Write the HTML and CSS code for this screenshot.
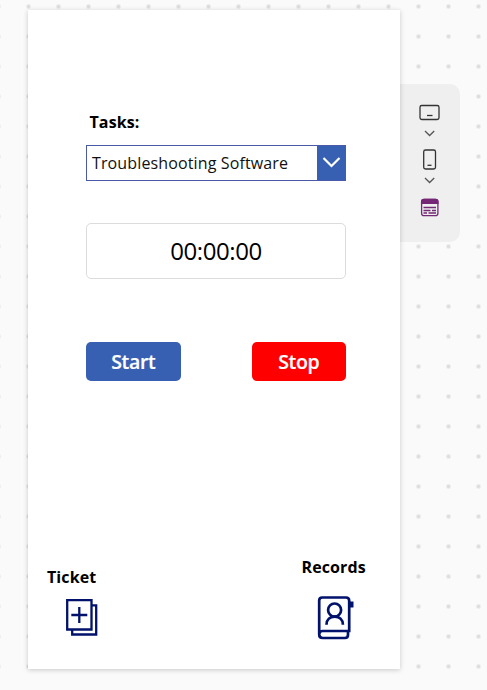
FILE: index.html
```
<!DOCTYPE html>
<html lang="en">
<head>
<meta charset="utf-8">
<title>Task timer</title>
<link rel="stylesheet" href="styles.css">
</head>
<body>
<main class="screen">
  <label class="label tasks-label">Tasks:</label>
  <div class="dropdown">
    <span class="dropdown-value">Troubleshooting Software</span>
    <span class="dropdown-arrow"><svg width="29" height="34" viewBox="0 0 29 34"><path d="M6.500 12l8 8 8-8" fill="none" stroke="#fff" stroke-width="2.200"/></svg></span>
  </div>
  <div class="timer">00:00:00</div>
  <div class="buttons">
    <button class="button start">Start</button>
    <button class="button stop">Stop</button>
  </div>
  <nav class="nav">
    <a class="nav-item ticket"><span class="label">Ticket</span>
      <svg width="34" height="40" viewBox="0 0 34 40" fill="none" stroke="#00126b" stroke-width="2.300"><path d="M2.200 2.200h24.300v29.300H2.200zM7.200 32v4.500h24V7.300h-4.500M14.300 9v16M6.300 17h16"/></svg>
    </a>
    <a class="nav-item records"><span class="label">Records</span>
      <svg width="40" height="46" viewBox="0 0 40 46" fill="none" stroke="#00126b" stroke-width="2.700"><path d="M4.200 39.500V5.500q0-3 3-3H31q3.200 0 3.200 3.200V36H7.500q-3.300 0-3.300 3.500 0 3.500 3.500 3.500H30q3 0 3-3.200V36"/><circle cx="19.600" cy="15" r="6.500"/><path d="M11.500 29.700c0-5 3.500-8 8.200-8s8.200 3 8.200 8"/><path d="M34.500 6.500h4v6h-4z" fill="#00126b" stroke="none"/></svg>
    </a>
  </nav>
</main>
<aside class="toolbar">
  <svg width="59" height="158" viewBox="0 0 59 158" fill="none" stroke="#333" stroke-width="1.300">
    <rect x="20" y="21.500" width="19" height="14" rx="1.800"/><path d="M27 31.500h5.500"/>
    <path d="M25 47l4.600 4.500 4.600-4.500" stroke="#555"/>
    <rect x="23.700" y="66" width="11.800" height="19" rx="1.800"/><path d="M27.500 81.300h4"/>
    <path d="M25 94l4.600 4.500 4.600-4.500" stroke="#555"/>
    <g stroke="#742774"><rect x="21.600" y="115.400" width="16.300" height="16.300" rx="2.500"/><path d="M21.600 119.300v-1.500q0-2.400 2.400-2.400h11.500q2.400 0 2.400 2.400v1.500z" fill="#742774"/><path d="M23.500 123.500h12.500M23.500 126.500h7M32 126.500h4M23.500 129h3.500M28.500 129h7.500"/></g>
  </svg>
</aside>
</body>
</html>
```
FILE: styles.css
```
* { box-sizing: border-box; }

body {
  margin: 0;
  height: 690px;
  padding: 10px 0 0 28px;
  display: flex;
  align-items: flex-start;
  overflow: hidden;
  font-family: "Open Sans", sans-serif;
  color: #000;
  background: #fafafa radial-gradient(circle at 15px 15px, #dedede 1.6px, transparent 2.5px) 13.5px -8.5px / 30px 30px;
}

.screen {
  width: 372px;
  height: 659px;
  padding: 101px 54px 0 58px;
  display: flex;
  flex-direction: column;
  background: #fff;
  box-shadow: 0 1px 5px rgba(0, 0, 0, .2);
  position: relative;
  z-index: 1;
}

.label {
  font-size: 16px;
  line-height: 22px;
  font-weight: 700;
  letter-spacing: .1px;
}

.tasks-label { padding-left: 3.5px; }

.dropdown {
  width: 260px;
  height: 36px;
  margin-top: 12px;
  display: flex;
  align-items: center;
  border: 1px solid #4a5aa8;
}

.dropdown-value {
  flex: 1;
  padding-left: 5px;
  font-size: 16px;
  letter-spacing: .13px;
  line-height: 34px;
  white-space: nowrap;
  color: #111;
}

.dropdown-arrow {
  width: 28px;
  height: 34px;
  background: #3860b2;
}

svg { display: block; }

.timer {
  width: 260px;
  height: 56px;
  margin-top: 42px;
  border: 1px solid #dcdcdc;
  border-radius: 5px;
  font-size: 24px;
  letter-spacing: -.4px;
  line-height: 54px;
  text-align: center;
}

.buttons {
  width: 260px;
  margin-top: 63px;
  display: flex;
  justify-content: space-between;
}

.button {
  width: 94.5px;
  height: 39px;
  padding: 0;
  border: 0;
  border-radius: 5px;
  font: 600 19.5px/39px "Open Sans", sans-serif;
  letter-spacing: -.35px;
  -webkit-text-stroke: .2px #fff;
  color: #fff;
}

.start { background: #3860b2; }
.stop { background: #f00; }

.nav {
  margin: 175px -24px 0 -39px;
  display: flex;
  justify-content: space-between;
}

.nav-item {
  display: flex;
  flex-direction: column;
}

.ticket { padding-top: 10px; }
.ticket svg { margin: 10px 0 0 18px; }
.records { width: 68.5px; }
.records svg { margin: 17px 0 0 13.5px; }

.toolbar {
  width: 59.5px;
  height: 158px;
  margin-top: 74px;
  background: #efefef;
  border-radius: 0 10px 10px 0;
}
```
